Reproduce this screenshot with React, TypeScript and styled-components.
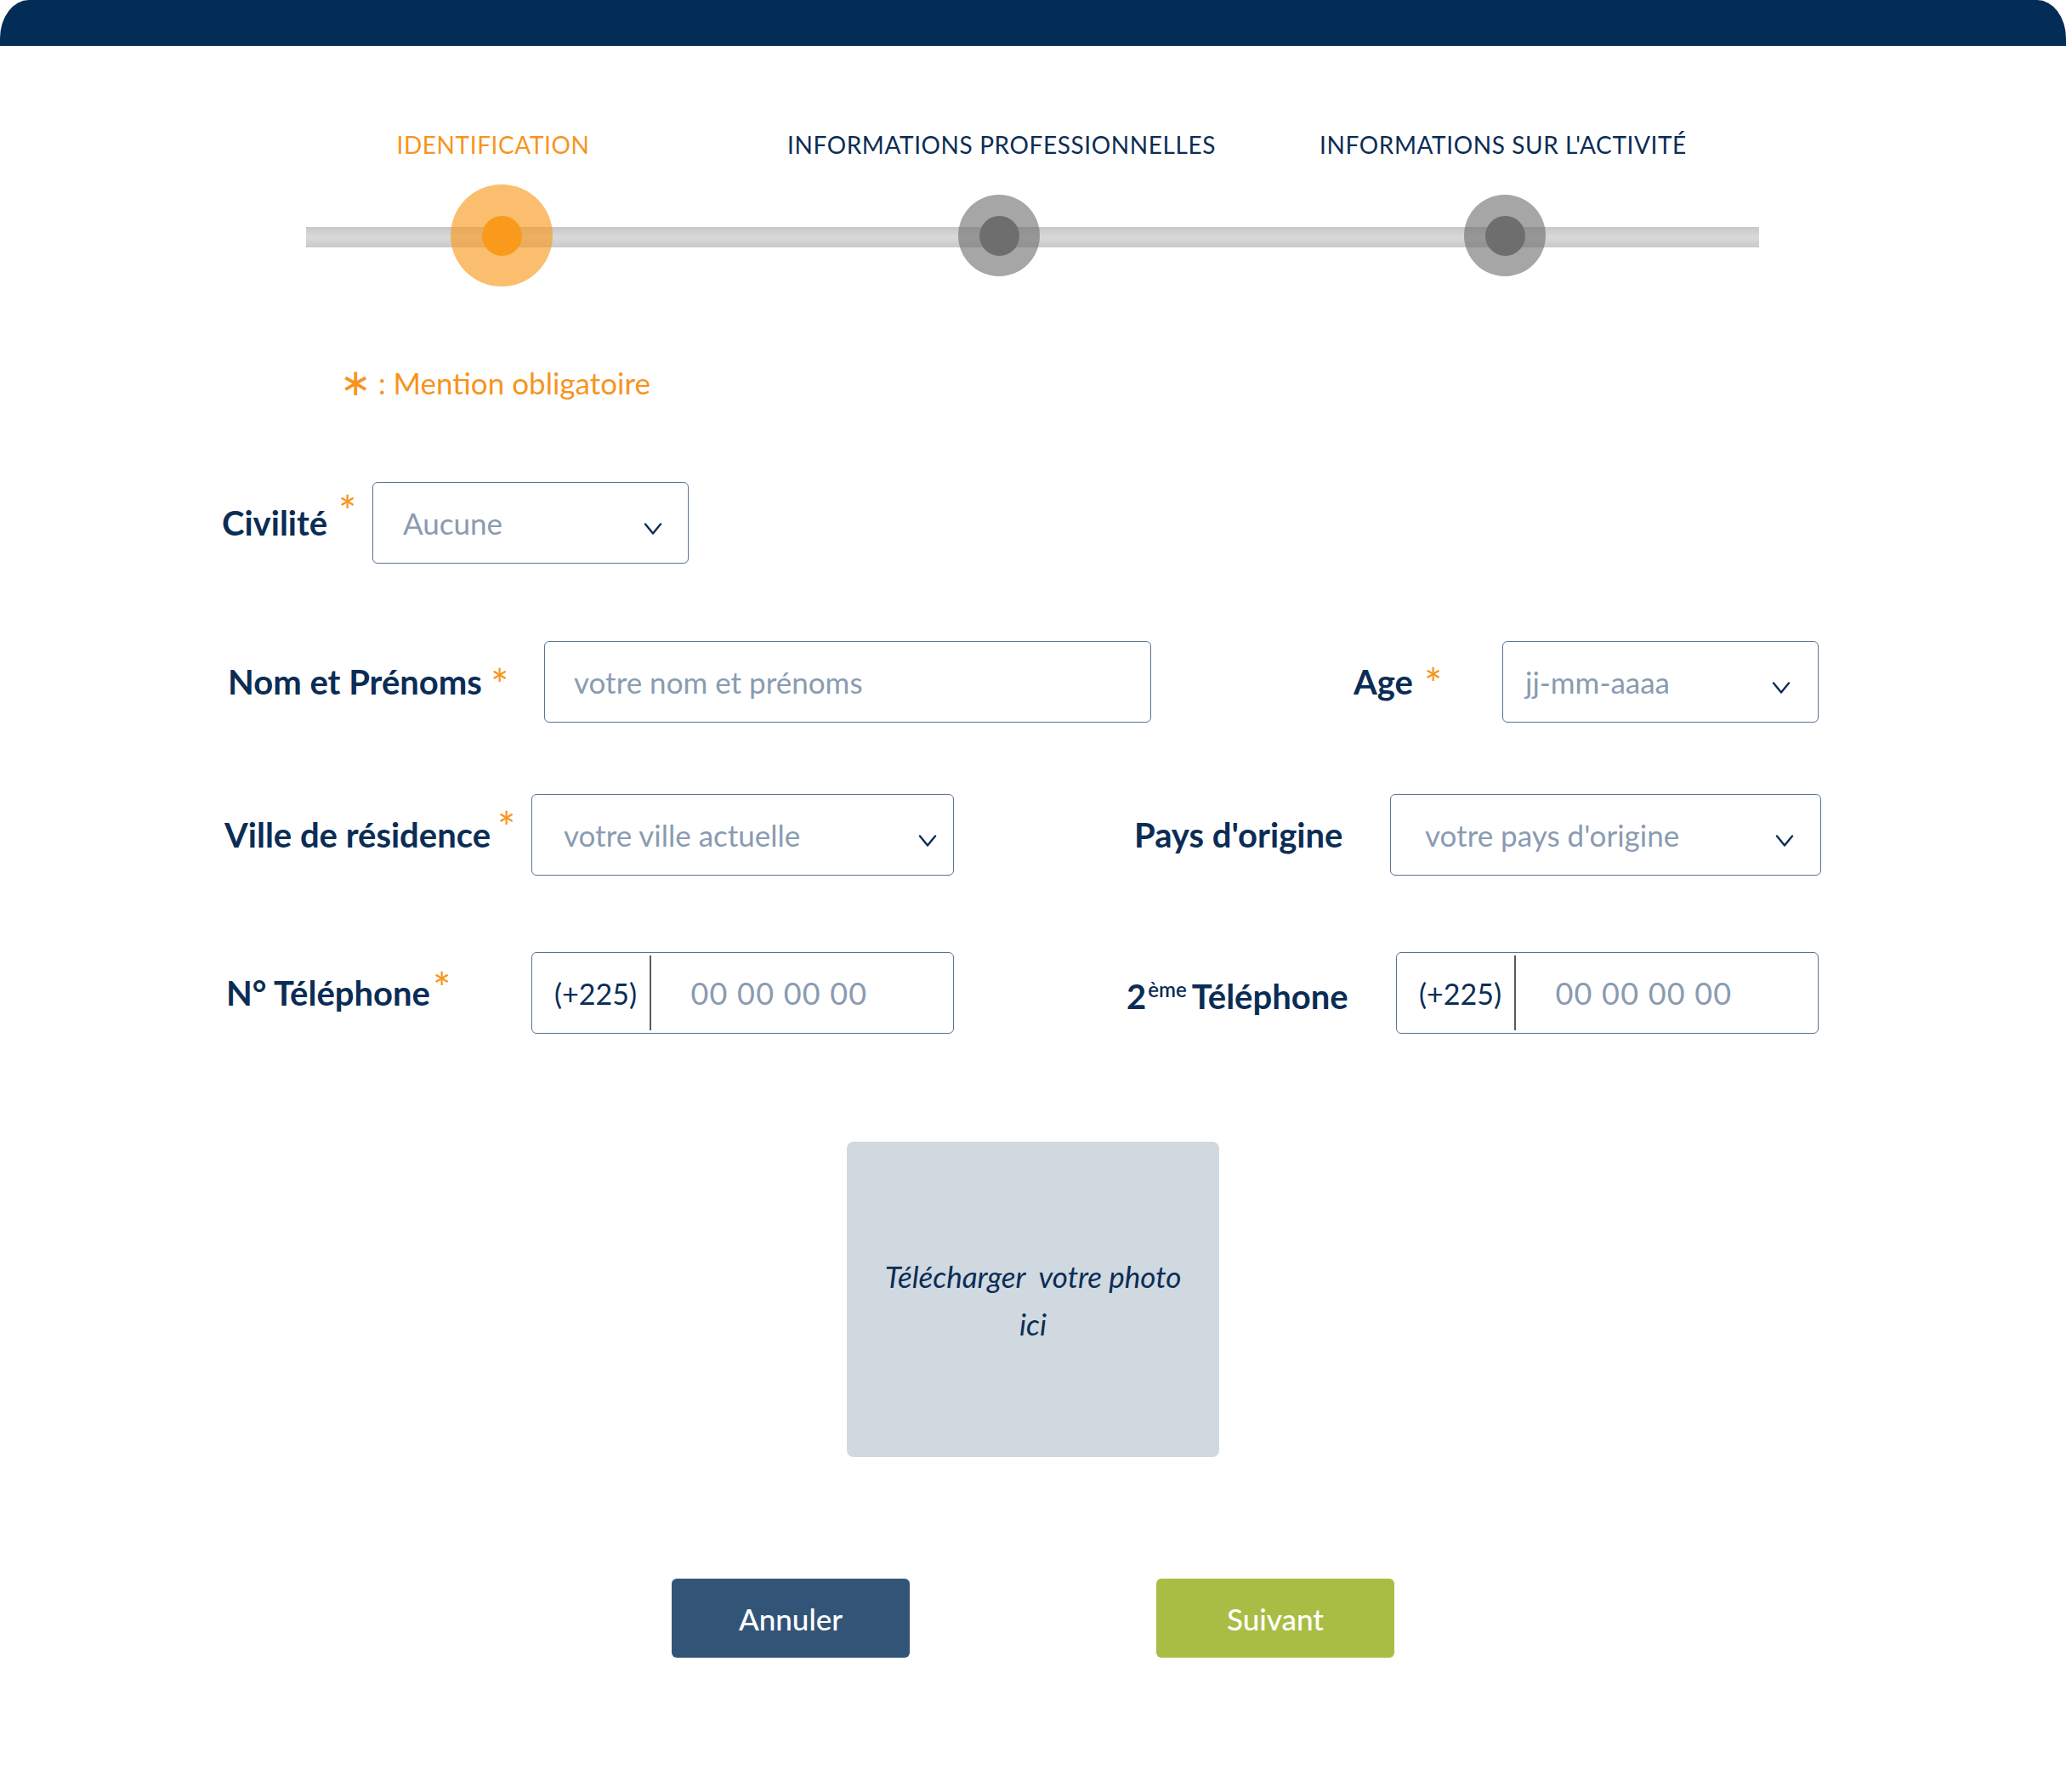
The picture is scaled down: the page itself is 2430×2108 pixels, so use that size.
import React from "react";
import styled, { createGlobalStyle } from "styled-components";

const NAVY = "#0b2d55";
const ORANGE = "#f7941d";
const PLACEHOLDER = "#8a9bb1";
const BORDER = "#5a7390";

const GlobalStyle = createGlobalStyle`
  html, body {
    margin: 0;
    padding: 0;
    background: #ffffff;
  }
  body {
    font-family: Lato, "Open Sans", sans-serif;
  }
  * { box-sizing: border-box; }
`;

const Page = styled.div`
  width: 2430px;
  min-height: 2108px;
  background: #ffffff;
  display: flex;
  flex-direction: column;
  font-family: Lato, "Open Sans", sans-serif;
`;

const TopBar = styled.div`
  height: 54px;
  background: #032d56;
  border-radius: 34px 34px 0 0 / 45px 45px 0 0;
`;

const Stepper = styled.div`
  position: relative;
  margin: 99px 0 0 295px;
  width: 1780px;
  display: grid;
  grid-template-columns: 590px 580px 610px;

  &::before {
    content: "";
    position: absolute;
    left: 65px;
    top: 114px;
    width: 1709px;
    height: 24px;
    background: linear-gradient(#c7c7c7, #d9d9d9 50%, #c9c9c9);
  }
`;

const Step = styled.div`
  position: relative;
  display: flex;
  flex-direction: column;
  align-items: center;
  gap: 30px;
`;

const StepLabel = styled.div<{ $color: string; $shift: number }>`
  font-size: 28px;
  line-height: 34px;
  letter-spacing: 0.6px;
  font-weight: 400;
  color: ${(p) => p.$color};
  white-space: nowrap;
  text-transform: uppercase;
  margin-left: ${(p) => p.$shift}px;
`;

const DotArea = styled.div`
  height: 120px;
  display: flex;
  align-items: center;
  justify-content: center;
`;

const Halo = styled.div<{ $size: number; $color: string }>`
  width: ${(p) => p.$size}px;
  height: ${(p) => p.$size}px;
  border-radius: 50%;
  background: ${(p) => p.$color};
  display: flex;
  align-items: center;
  justify-content: center;
`;

const Core = styled.div<{ $color: string }>`
  width: 47px;
  height: 47px;
  border-radius: 50%;
  background: ${(p) => p.$color};
`;

const Note = styled.div`
  margin: 91px 0 0 400px;
  display: flex;
  align-items: center;
  height: 44px;
  font-size: 35px;
  line-height: 44px;
  color: ${ORANGE};
  white-space: pre;
`;

const NoteStar = styled.span`
  font-family: "DejaVu Sans", sans-serif;
  font-size: 44px;
  margin-right: 8px;
`;

const FormArea = styled.div`
  margin-left: 261px;
  display: flex;
  flex-direction: column;
`;

const Row = styled.div<{ $mt: number }>`
  display: flex;
  align-items: center;
  height: 96px;
  margin-top: ${(p) => p.$mt}px;
`;

const Label = styled.div<{ $w: number; $ml?: number }>`
  width: ${(p) => p.$w}px;
  margin-left: ${(p) => p.$ml ?? 0}px;
  flex-shrink: 0;
  font-size: 40px;
  line-height: 48px;
  font-weight: 700;
  color: ${NAVY};
  white-space: nowrap;
`;

const Req = styled.span<{ $gap: number; $raise: number }>`
  color: ${ORANGE};
  font-size: 50px;
  line-height: 0;
  font-weight: 400;
  margin-left: ${(p) => p.$gap}px;
  vertical-align: ${(p) => p.$raise}px;
`;

const Sup = styled.span`
  font-size: 24px;
  font-weight: 600;
  vertical-align: 14px;
  margin: 0 6px 0 2px;
`;

const Box = styled.div<{ $w: number; $pl?: number; $pr?: number }>`
  width: ${(p) => p.$w}px;
  height: 96px;
  flex-shrink: 0;
  border: 1.5px solid ${BORDER};
  border-radius: 6px;
  background: #ffffff;
  display: flex;
  align-items: center;
  padding-left: ${(p) => p.$pl ?? 0}px;
  padding-right: ${(p) => p.$pr ?? 0}px;
`;

const Line = styled.div`
  flex: 1;
  display: flex;
  align-items: baseline;
`;

const Placeholder = styled.span`
  flex: 1;
  font-size: 35px;
  line-height: 42px;
  font-weight: 400;
  color: ${PLACEHOLDER};
  white-space: nowrap;
`;

const Chevron = styled.svg`
  width: 22px;
  height: 14px;
  flex-shrink: 0;
  margin-bottom: -3px;
`;

const Prefix = styled.span`
  width: 138px;
  padding-left: 26px;
  font-size: 34px;
  color: ${NAVY};
  white-space: nowrap;
`;

const Divider = styled.div`
  align-self: stretch;
  width: 1.5px;
  margin: 3px 0;
  background: #5b5b5b;
`;

const Digits = styled.span`
  padding-left: 47px;
  font-size: 36px;
  letter-spacing: 1.2px;
  color: ${PLACEHOLDER};
  white-space: nowrap;
`;

const PhotoBox = styled.div`
  width: 438px;
  height: 371px;
  margin: 127px auto 0;
  background: #d0d8e0;
  border-radius: 8px;
  display: flex;
  align-items: center;
  justify-content: center;
  text-align: center;
  font-style: italic;
  font-size: 35px;
  line-height: 56px;
  color: ${NAVY};
  white-space: pre;
`;

const ButtonRow = styled.div`
  margin-top: 143px;
  display: flex;
  justify-content: center;
  gap: 290px;
`;

const Button = styled.button<{ $bg: string }>`
  width: 280px;
  height: 93px;
  border: none;
  border-radius: 6px;
  background: ${(p) => p.$bg};
  color: #ffffff;
  font-family: Lato, "Open Sans", sans-serif;
  font-size: 35px;
  font-weight: 500;
  cursor: pointer;
`;

const ChevronIcon = () => (
  <Chevron viewBox="0 0 22 14">
    <polyline points="2,1.5 11,12.5 20,1.5" fill="none" stroke={NAVY} strokeWidth="2.4" strokeLinecap="round" strokeLinejoin="round" />
  </Chevron>
);

const steps = [
  { label: "Identification", active: true, shift: -20 },
  { label: "Informations professionnelles", active: false, shift: 6 },
  { label: "Informations sur l'activité", active: false, shift: -4 },
];

export default function App() {
  return (
    <Page>
      <GlobalStyle />
      <TopBar />

      <Stepper>
        {steps.map((s) => (
          <Step key={s.label}>
            <StepLabel $color={s.active ? ORANGE : NAVY} $shift={s.shift}>
              {s.label}
            </StepLabel>
            <DotArea>
              {s.active ? (
                <Halo $size={120} $color="rgba(249,154,28,0.64)">
                  <Core $color="#f99a1c" />
                </Halo>
              ) : (
                <Halo $size={96} $color="rgba(110,110,110,0.61)">
                  <Core $color="#6e6e6e" />
                </Halo>
              )}
            </DotArea>
          </Step>
        ))}
      </Stepper>

      <Note>
        <NoteStar>∗</NoteStar>: Mention obligatoire
      </Note>

      <FormArea>
        <Row $mt={95}>
          <Label $w={177}>
            Civilité<Req $gap={13} $raise={10}>*</Req>
          </Label>
          <Box $w={372} $pl={35} $pr={30}>
            <Line>
              <Placeholder>Aucune</Placeholder>
              <ChevronIcon />
            </Line>
          </Box>
        </Row>

        <Row $mt={91}>
          <Label $w={372} $ml={7}>
            Nom et Prénoms<Req $gap={10} $raise={-7}>*</Req>
          </Label>
          <Box $w={714} $pl={34}>
            <Placeholder>votre nom et prénoms</Placeholder>
          </Box>
          <Label $w={175} $ml={238}>
            Age<Req $gap={13} $raise={-6}>*</Req>
          </Label>
          <Box $w={372} $pl={26} $pr={32}>
            <Line>
              <Placeholder>jj-mm-aaaa</Placeholder>
              <ChevronIcon />
            </Line>
          </Box>
        </Row>

        <Row $mt={84}>
          <Label $w={361} $ml={3}>
            Ville de résidence<Req $gap={8} $raise={5}>*</Req>
          </Label>
          <Box $w={497} $pl={37} $pr={19}>
            <Line>
              <Placeholder>votre ville actuelle</Placeholder>
              <ChevronIcon />
            </Line>
          </Box>
          <Label $w={301} $ml={212}>
            Pays d'origine
          </Label>
          <Box $w={507} $pl={40} $pr={31}>
            <Line>
              <Placeholder>votre pays d'origine</Placeholder>
              <ChevronIcon />
            </Line>
          </Box>
        </Row>

        <Row $mt={90}>
          <Label $w={359} $ml={5}>
            N° Téléphone<Req $gap={3} $raise={2}>*</Req>
          </Label>
          <Box $w={497}>
            <Prefix>(+225)</Prefix>
            <Divider />
            <Digits>00 00 00 00</Digits>
          </Box>
          <Label $w={317} $ml={203}>
            2<Sup>ème</Sup>Téléphone
          </Label>
          <Box $w={497}>
            <Prefix>(+225)</Prefix>
            <Divider />
            <Digits>00 00 00 00</Digits>
          </Box>
        </Row>
      </FormArea>

      <PhotoBox>{"Télécharger\u00a0 votre photo\nici"}</PhotoBox>

      <ButtonRow>
        <Button $bg="#325577">Annuler</Button>
        <Button $bg="#a9bd44">Suivant</Button>
      </ButtonRow>
    </Page>
  );
}
